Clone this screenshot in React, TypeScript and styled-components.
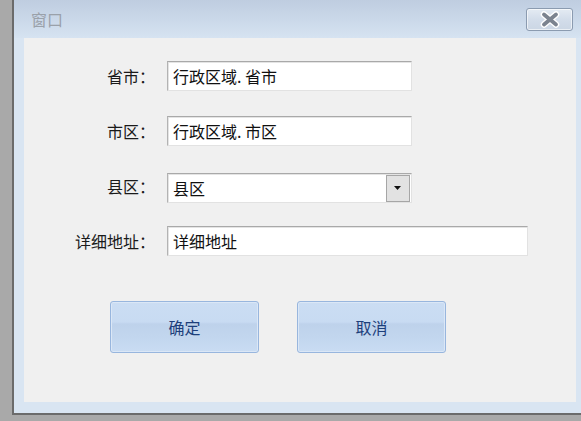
import React from "react";
import styled, { createGlobalStyle } from "styled-components";

const Global = createGlobalStyle`
  html, body { margin: 0; padding: 0; }
  body {
    background: #a9a9a9;
    font-family: "Noto Sans CJK SC", "Noto Sans", sans-serif;
    overflow: hidden;
  }
`;

const Desktop = styled.div`
  height: 421px;
  padding-left: 12px;
  box-sizing: border-box;
`;

const Window = styled.div`
  height: 415px;
  box-sizing: border-box;
  border-left: 2px solid #6b6b6b;
  border-bottom: 2px solid #6b6b6b;
  background: #d9e5f2;
  display: flex;
  flex-direction: column;
`;

const TitleBar = styled.div`
  height: 38px;
  flex: none;
  display: flex;
  align-items: flex-start;
  justify-content: space-between;
  background: linear-gradient(to bottom, #bfcde0 0%, #cad8e9 50%, #d6e3f1 100%);
  padding: 0 8px 0 17px;
  box-sizing: border-box;
`;

const Title = styled.span`
  margin-top: 9px;
  font-size: 16px;
  line-height: 20px;
  color: #9aa1aa;
`;

const CloseButton = styled.div`
  margin-top: 8px;
  width: 47px;
  height: 23px;
  box-sizing: border-box;
  border: 1px solid #8b9bb0;
  border-radius: 3px;
  background: linear-gradient(to bottom, #e4ebf3 0%, #d3ddea 50%, #cbd6e4 100%);
  box-shadow: inset 0 0 0 1px rgba(255, 255, 255, 0.6);
  display: flex;
  align-items: center;
  justify-content: center;
`;

const Content = styled.div`
  flex: 1;
  margin: 0 5px 11px 10px;
  background: #f0f0f0;
  padding: 23px 0 0 0;
  box-sizing: border-box;
  display: flex;
  flex-direction: column;
`;

const Form = styled.div`
  display: grid;
  grid-template-columns: 131px auto;
  column-gap: 12px;
  row-gap: 25px;
  justify-items: start;
  align-items: center;
`;

const Label = styled.span`
  justify-self: end;
  font-size: 16px;
  line-height: 30px;
  color: #1a1a1a;
  white-space: nowrap;
`;

const TextBox = styled.div<{ $w: number; $shift?: number }>`
  width: ${(p) => p.$w}px;
  height: 30px;
  box-sizing: border-box;
  background: #ffffff;
  border-top: 1px solid #a9a9a9;
  border-left: 1px solid #b3b3b3;
  border-right: 1px solid #e2e2e2;
  border-bottom: 1px solid #e2e2e2;
  box-shadow: inset 1px 1px 0 #e4e4e4;
  display: flex;
  align-items: center;
  padding-left: 5px;
  font-size: 16px;
  color: #111;
  position: relative;
  top: ${(p) => p.$shift ?? 0}px;
`;

const ComboText = styled.span`
  flex: 1;
`;

const DropButton = styled.div`
  width: 24px;
  height: 27px;
  margin-right: 1px;
  box-sizing: border-box;
  border: 1px solid #a6a6a6;
  background: #e2e2e2;
  display: flex;
  align-items: center;
  justify-content: center;
`;

const ButtonRow = styled.div`
  display: flex;
  gap: 38px;
  padding-left: 86px;
  margin-top: 45px;
`;

const Button = styled.div`
  width: 149px;
  height: 52px;
  box-sizing: border-box;
  border: 1px solid #98b6de;
  border-radius: 3px;
  background: linear-gradient(
    to bottom,
    #cbddf3 0%,
    #c8dbf2 40%,
    #bed2eb 44%,
    #c2d6ee 70%,
    #c9dcf3 100%
  );
  box-shadow: inset 0 0 0 1px #dbe7f6;
  display: flex;
  align-items: center;
  justify-content: center;
  font-size: 16px;
  color: #1d3f7b;
`;

export default function App() {
  return (
    <>
      <Global />
      <Desktop>
        <Window>
          <TitleBar>
            <Title>窗口</Title>
            <CloseButton>
              <svg width="24" height="17" viewBox="0 0 24 17">
                <path d="M6 3.5 L18 13.5 M18 3.5 L6 13.5" stroke="#ffffff" strokeWidth="6.5" strokeLinecap="round" />
                <path d="M6 3.5 L18 13.5 M18 3.5 L6 13.5" stroke="#7b838f" strokeWidth="3.8" strokeLinecap="round" />
              </svg>
            </CloseButton>
          </TitleBar>
          <Content>
            <Form>
              <Label>省市：</Label>
              <TextBox $w={245}>行政区域. 省市</TextBox>
              <Label>市区：</Label>
              <TextBox $w={245}>行政区域. 市区</TextBox>
              <Label>县区：</Label>
              <TextBox $w={245} $shift={2}>
                <ComboText>县区</ComboText>
                <DropButton>
                  <svg width="8" height="5" viewBox="0 0 8 5">
                    <path d="M0 0 H7 L3.5 4 Z" fill="#111" />
                  </svg>
                </DropButton>
              </TextBox>
              <Label>详细地址：</Label>
              <TextBox $w={361}>详细地址</TextBox>
            </Form>
            <ButtonRow>
              <Button>确定</Button>
              <Button>取消</Button>
            </ButtonRow>
          </Content>
        </Window>
      </Desktop>
    </>
  );
}
